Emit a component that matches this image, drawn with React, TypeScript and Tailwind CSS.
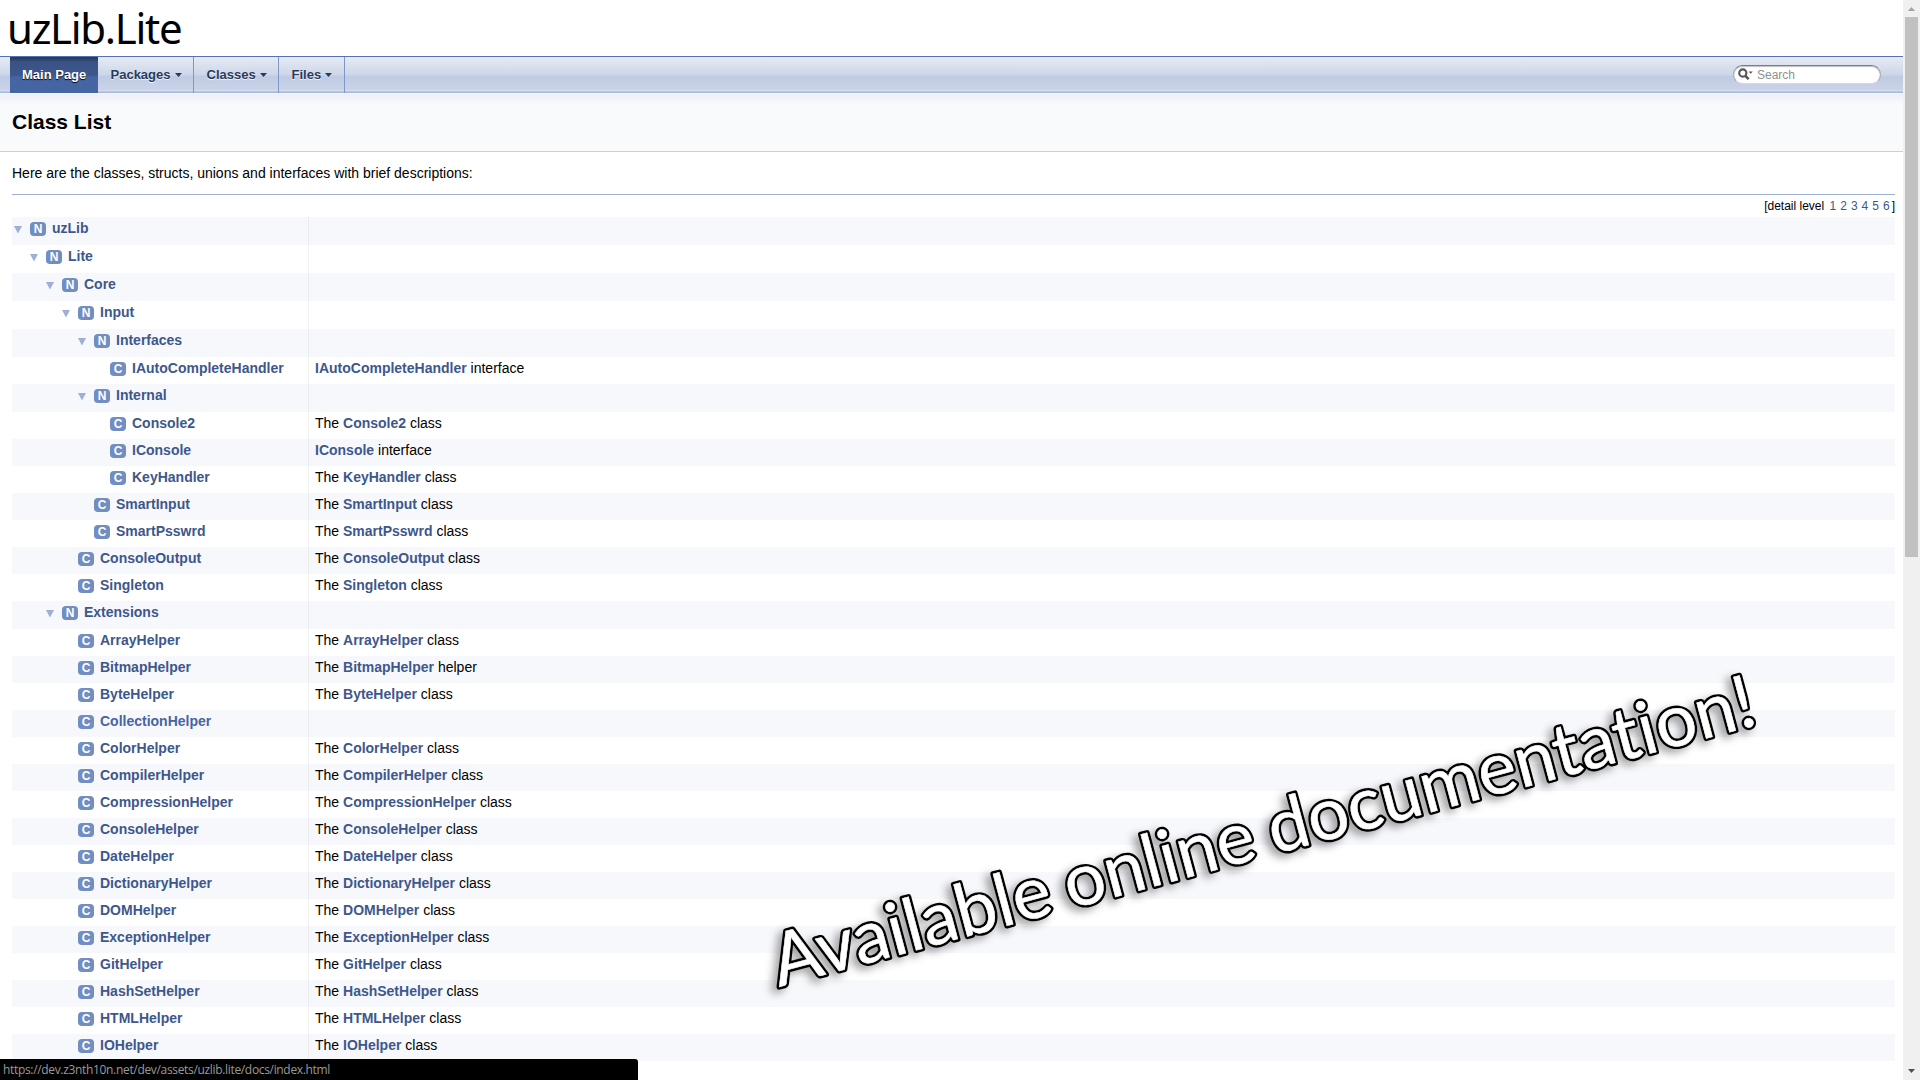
import React from "react";

type Row = { level: number; kind: "N" | "C"; name: string; suffix?: string; prefix?: string; hover?: boolean };

const rows: Row[] = [
  { level: 0, kind: "N", name: "uzLib" },
  { level: 1, kind: "N", name: "Lite" },
  { level: 2, kind: "N", name: "Core" },
  { level: 3, kind: "N", name: "Input" },
  { level: 4, kind: "N", name: "Interfaces" },
  { level: 5, kind: "C", name: "IAutoCompleteHandler", suffix: " interface" },
  { level: 4, kind: "N", name: "Internal" },
  { level: 5, kind: "C", name: "Console2", prefix: "The ", suffix: " class" },
  { level: 5, kind: "C", name: "IConsole", suffix: " interface" },
  { level: 5, kind: "C", name: "KeyHandler", prefix: "The ", suffix: " class" },
  { level: 4, kind: "C", name: "SmartInput", prefix: "The ", suffix: " class" },
  { level: 4, kind: "C", name: "SmartPsswrd", prefix: "The ", suffix: " class" },
  { level: 3, kind: "C", name: "ConsoleOutput", prefix: "The ", suffix: " class" },
  { level: 3, kind: "C", name: "Singleton", prefix: "The ", suffix: " class" },
  { level: 2, kind: "N", name: "Extensions" },
  { level: 3, kind: "C", name: "ArrayHelper", prefix: "The ", suffix: " class" },
  { level: 3, kind: "C", name: "BitmapHelper", prefix: "The ", suffix: " helper" },
  { level: 3, kind: "C", name: "ByteHelper", prefix: "The ", suffix: " class" },
  { level: 3, kind: "C", name: "CollectionHelper", hover: true },
  { level: 3, kind: "C", name: "ColorHelper", prefix: "The ", suffix: " class" },
  { level: 3, kind: "C", name: "CompilerHelper", prefix: "The ", suffix: " class" },
  { level: 3, kind: "C", name: "CompressionHelper", prefix: "The ", suffix: " class" },
  { level: 3, kind: "C", name: "ConsoleHelper", prefix: "The ", suffix: " class" },
  { level: 3, kind: "C", name: "DateHelper", prefix: "The ", suffix: " class" },
  { level: 3, kind: "C", name: "DictionaryHelper", prefix: "The ", suffix: " class" },
  { level: 3, kind: "C", name: "DOMHelper", prefix: "The ", suffix: " class" },
  { level: 3, kind: "C", name: "ExceptionHelper", prefix: "The ", suffix: " class" },
  { level: 3, kind: "C", name: "GitHelper", prefix: "The ", suffix: " class" },
  { level: 3, kind: "C", name: "HashSetHelper", prefix: "The ", suffix: " class" },
  { level: 3, kind: "C", name: "HTMLHelper", prefix: "The ", suffix: " class" },
  { level: 3, kind: "C", name: "IOHelper", prefix: "The ", suffix: " class" },
];

function Caret() {
  return (
    <svg width="7" height="4" viewBox="0 0 7 4" className="ml-1 fill-[#283A5D]">
      <path d="M0 0H7L3.5 4Z" />
    </svg>
  );
}

function MenuItem({ label, width }: { label: string; width: number }) {
  return (
    <li
      className="flex h-9 items-center border-r border-[#7f97c8] pl-[12.5px] text-[#283A5D] [text-shadow:0_1px_1px_rgba(255,255,255,0.9)]"
      style={{ width }}
    >
      <span className="-mt-px">{label}</span>
      <Caret />
    </li>
  );
}

function TreeRow({ row, even }: { row: Row; even: boolean }) {
  const isSpace = row.kind === "N";
  return (
    <div className={`flex ${isSpace ? "h-7" : "h-[27px]"} ${even ? "bg-[#F7F8FC]" : "bg-white"}`}>
      <div className="flex w-[296px] shrink-0 items-start" style={{ paddingLeft: row.level * 16 }}>
        <div className="flex w-[18px] shrink-0 pt-[9px] pl-[1.5px]">
          {isSpace && (
            <svg width="8" height="8" viewBox="0 0 8 8" className="fill-[#9CAFD4]">
              <path d="M0 0H8L4 7.4Z" />
            </svg>
          )}
        </div>
        <div className="mt-[5px] flex h-[14px] w-4 shrink-0 items-center justify-center rounded-[4px] bg-[#728DC1] text-[12px] leading-[14px] font-bold text-white">
          {row.kind}
        </div>
        <span className={`ml-1.5 leading-[22px] font-bold whitespace-nowrap ${row.hover ? "text-[#4665A2]" : "text-[#3D578C]"}`}>
          {row.name}
        </span>
      </div>
      <div className="grow border-l border-black/5 pl-1.5 leading-[22px] whitespace-pre">
        {row.suffix && (
          <>
            {row.prefix}
            <b className="font-bold text-[#3D578C]">{row.name}</b>
            {row.suffix}
          </>
        )}
      </div>
    </div>
  );
}

function SearchBox() {
  return (
    <div className="mt-2 flex h-[19px] w-[148px] items-center rounded-full border border-t-[#7d7d80] border-r-[#a5a7ad] border-b-[#d5d8de] border-l-[#a5a7ad] bg-white pl-1 shadow-[inset_0_1px_1px_rgba(0,0,0,0.25)]">
      <svg width="16" height="13" viewBox="0 0 16 13" fill="none">
        <circle cx="4.8" cy="5" r="3.6" stroke="#555" strokeWidth="2.1" />
        <path d="M7.4 7.8L10.6 11.2" stroke="#555" strokeWidth="2.5" />
        <path d="M10.6 3.4H14.8L12.7 5.8Z" fill="#555" />
      </svg>
      <span className="ml-[3px] text-[12px] leading-none text-[#909090]">Search</span>
    </div>
  );
}

function Scrollbar() {
  return (
    <div className="flex h-full w-[17px] shrink-0 flex-col items-center justify-between bg-[#F0F0F0]">
      <div className="flex h-[557px] flex-col items-center">
        <svg width="17" height="17" viewBox="0 0 17 17" className="fill-[#a3a3a3]">
          <path d="M5 11L8.5 7L12 11Z" />
        </svg>
        <div className="w-[13px] grow bg-[#C1C1C1]" />
      </div>
      <svg width="17" height="17" viewBox="0 0 17 17" className="fill-[#505050]">
        <path d="M5 6L8.5 10L12 6Z" />
      </svg>
    </div>
  );
}

const bannerText = {
  textLength: "1015",
  lengthAdjust: "spacingAndGlyphs",
  fontSize: "73",
  strokeLinejoin: "round",
} as const;

function Banner() {
  return (
    <svg
      className="absolute top-0 left-0 [filter:drop-shadow(-5px_4px_4px_rgba(0,0,0,0.36))]"
      width="1903"
      height="1080"
      viewBox="0 0 1903 1080"
      aria-label="Available online documentation!"
    >
      <g transform="translate(779 987) rotate(-15)">
        <text
          {...bannerText}
          strokeWidth="5.4"
          aria-hidden="true"
          className="fill-black stroke-black [font-family:Lato,sans-serif] [font-variant-ligatures:none] [word-spacing:-3px]"
        >
          Available online documentation!
        </text>
        <text
          {...bannerText}
          strokeWidth="0.5"
          className="fill-white stroke-white [font-family:Lato,sans-serif] [font-variant-ligatures:none] [word-spacing:-3px]"
        >
          Available online documentation!
        </text>
      </g>
    </svg>
  );
}

export default function App() {
  return (
    <div className="relative flex h-[1080px] w-[1920px] overflow-hidden bg-white font-['Liberation_Sans',Arial,sans-serif] text-[14px] text-black">
      <main className="flex h-full w-[1903px] flex-col">
        <header className="h-14 shrink-0 pl-[7px]">
          <h1 className="text-[42px] leading-[56px] whitespace-nowrap font-['Noto_Sans',Tahoma,sans-serif] tracking-[-1.3px]">
            uzLib.Lite
          </h1>
        </header>
        <nav className="flex h-[37px] shrink-0 justify-between border-t border-[#5373B4] bg-[linear-gradient(to_bottom,#E6EAF4_0%,#CDD6E8_50%,#BFCBE3_54%,#C9D2E8_90%,#D8DFEF_94%,#A9B8DA_97%)] pr-[22px] pl-2.5">
          <ul className="flex text-[13px] font-bold">
            <li className="flex h-9 w-[88px] items-center bg-[linear-gradient(to_bottom,#26375a_0%,#3a5285_14%,#3D578C_50%,#4464a3_56%,#4665A2_100%)] pl-3 text-white [text-shadow:0_1px_1px_rgba(0,0,0,1)]">
              <span className="-mt-px">Main Page</span>
            </li>
            <MenuItem label="Packages" width={96} />
            <MenuItem label="Classes" width={85} />
            <MenuItem label="Files" width={66} />
          </ul>
          <SearchBox />
        </nav>
        <div className="flex h-[59px] shrink-0 items-center border-b border-[#C4CFE5] bg-[linear-gradient(to_bottom,#ffffff_0px,#ECF0F7_1px,#F9FAFC_12px)] pl-3">
          <h2 className="text-[21px] leading-6 font-bold">Class List</h2>
        </div>
        <section className="flex flex-col pr-2 pl-3">
          <p className="mt-2.5 h-8 leading-[22px]">Here are the classes, structs, unions and interfaces with brief descriptions:</p>
          <div className="flex h-[23px] justify-end border-t border-[#9CAFD4] text-[12px] leading-[22px]">
            [detail level&nbsp;
            {[1, 2, 3, 4, 5, 6].map((n) => (
              <span key={n} className="px-0.5 text-[#3D578C]">
                {n}
              </span>
            ))}
            ]
          </div>
          <div className="flex flex-col">
            {rows.map((r, i) => (
              <TreeRow key={i} row={r} even={i % 2 === 0} />
            ))}
          </div>
        </section>
      </main>
      <Scrollbar />
      <Banner />
      <div className="absolute bottom-0 left-0 flex h-[21px] w-[638px] items-center rounded-tr-[3px] bg-black pl-[3px] font-['Open_Sans',sans-serif] text-[12px] tracking-[-0.33px] text-[#9a9a9a]">
        https://dev.z3nth10n.net/dev/assets/uzlib.lite/docs/index.html
      </div>
    </div>
  );
}
